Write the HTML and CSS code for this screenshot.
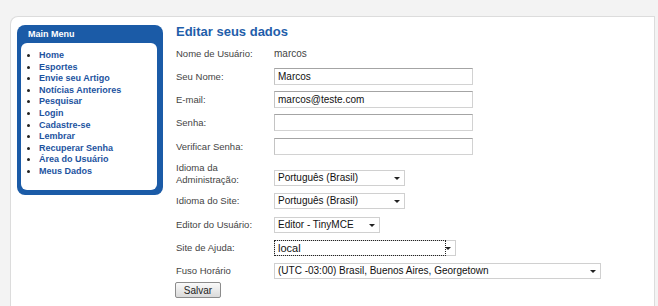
FILE: index.html
```html
<!DOCTYPE html>
<html>
<head>
	<title>Editar seus dados</title>
	<link rel="stylesheet" href="styles.css">
</head>
<body>
	<div class="page">
		<div class="sidebar">
			<div class="menu">
				<h3>Main Menu</h3>
				<div class="menu-body">
					<ul>
						<li><a href="#">Home</a></li>
						<li><a href="#">Esportes</a></li>
						<li><a href="#">Envie seu Artigo</a></li>
						<li><a href="#">Notícias Anteriores</a></li>
						<li><a href="#">Pesquisar</a></li>
						<li><a href="#">Login</a></li>
						<li><a href="#">Cadastre-se</a></li>
						<li><a href="#">Lembrar</a></li>
						<li><a href="#">Recuperar Senha</a></li>
						<li><a href="#">Área do Usuário</a></li>
						<li><a href="#">Meus Dados</a></li>
					</ul>
				</div>
			</div>
		</div>
		<div class="content">
			<h2>Editar seus dados</h2>
			<form>
				<table class="form">
					<tr>
						<td class="label">Nome de Usuário:</td>
						<td class="value">marcos</td>
					</tr>
					<tr>
						<td class="label">Seu Nome:</td>
						<td><input type="text" value="Marcos"></td>
					</tr>
					<tr>
						<td class="label">E-mail:</td>
						<td><input type="text" value="marcos@teste.com"></td>
					</tr>
					<tr>
						<td class="label">Senha:</td>
						<td><input type="password"></td>
					</tr>
					<tr class="wide">
						<td class="label">Verificar Senha:</td>
						<td><input type="password"></td>
					</tr>
					<tr class="tall">
						<td class="label">Idioma da<br>Administração:</td>
						<td class="bottom">
							<span class="select lang"><select><option>Português (Brasil)</option></select></span>
						</td>
					</tr>
					<tr class="wide">
						<td class="label">Idioma do Site:</td>
						<td>
							<span class="select lang"><select><option>Português (Brasil)</option></select></span>
						</td>
					</tr>
					<tr>
						<td class="label">Editor do Usuário:</td>
						<td>
							<span class="select editor"><select><option>Editor - TinyMCE</option></select></span>
						</td>
					</tr>
					<tr>
						<td class="label">Site de Ajuda:</td>
						<td>
							<span class="select help focused"><select><option>local</option></select></span>
						</td>
					</tr>
					<tr>
						<td class="label">Fuso Horário</td>
						<td>
							<span class="select zone"><select><option>(UTC -03:00) Brasil, Buenos Aires, Georgetown</option></select></span>
						</td>
					</tr>
				</table>
				<button type="submit" class="save">Salvar</button>
			</form>
		</div>
	</div>
</body>
</html>
```

FILE: styles.css
```css
body {
  margin: 0;
  background-color: #f3f3f3;
  font-family: "Liberation Sans", Arial, sans-serif;
  color: #333;
}

.page {
  display: flex;
  gap: 13px;
  margin: 16px 3px 0 10px;
  padding: 8px 0 0 6px;
  min-height: 290px;
  box-sizing: border-box;
  background-color: #fff;
  border: 1px solid #dcdcdc;
  border-bottom: none;
  border-top-left-radius: 8px;
}

/* main menu */
.sidebar {
  width: 146px;
  flex-shrink: 0;
}

.menu {
  background-color: #1b5ba7;
  border-radius: 8px;
  padding: 0 6px 5px 4px;
}

.menu h3 {
  margin: 0;
  height: 18px;
  line-height: 19px;
  padding-left: 7px;
  font-size: 9px;
  font-weight: bold;
  color: #fff;
}

.menu-body {
  background-color: #fff;
  border-radius: 6px;
  padding: 7px 0 12px 0;
}

.menu-body ul {
  margin: 0;
  padding-left: 18px;
  color: #222;
}

.menu-body li {
  font-size: 9px;
  line-height: 11.6px;
  font-weight: bold;
}

.menu-body a {
  color: #1d539f;
  text-decoration: none;
}

/* content */
.content {
  flex: 1;
}

.content h2 {
  margin: 0 0 3px;
  font-size: 13px;
  line-height: 14px;
  color: #1f5eaa;
}

.form {
  border-collapse: collapse;
}

.form td {
  height: 23px;
  padding: 0;
  vertical-align: middle;
}

.form tr.wide td {
  height: 25px;
}

.form tr.tall td {
  height: 27px;
}

.form td.bottom {
  vertical-align: bottom;
  padding-bottom: 2px;
}

.form td.label {
  width: 98px;
  font-size: 9.5px;
  line-height: 12px;
  color: #444;
}

.form td.value {
  font-size: 10px;
  color: #444;
}

.form input {
  display: block;
  width: 199px;
  height: 17px;
  box-sizing: border-box;
  margin: 0;
  padding: 0 3px;
  font-family: "Liberation Sans", Arial, sans-serif;
  font-size: 10px;
  color: #111;
  border: 1px solid #d2d2d2;
  border-top-color: #a4a4a4;
  border-left-color: #c4c4c4;
}

/* selects with a drawn arrow */
.select {
  position: relative;
  display: block;
  height: 16px;
  box-sizing: border-box;
  border: 1px solid #d0d0d0;
  background-color: #fff;
}

.select::after {
  content: "";
  position: absolute;
  right: 4px;
  top: 6px;
  border-left: 3px solid transparent;
  border-right: 3px solid transparent;
  border-top: 3px solid #222;
}

.select select {
  appearance: none;
  display: block;
  width: 100%;
  height: 14px;
  margin: 0;
  padding: 0 14px 0 3px;
  border: none;
  background: transparent;
  font-family: "Liberation Sans", Arial, sans-serif;
  font-size: 10px;
  line-height: 14px;
  color: #111;
}

.select.lang {
  width: 131px;
}

.select.editor {
  width: 106px;
}

.select.help {
  width: 182px;
}

.select.zone {
  width: 327px;
}

.select.focused select {
  width: 170px;
  padding-right: 0;
  outline: 1px dotted #222;
  outline-offset: 0;
  font-size: 11px;
}

.save {
  display: block;
  width: 46px;
  height: 16px;
  margin: 0 0 0 -1px;
  padding: 0;
  font-family: "Liberation Sans", Arial, sans-serif;
  font-size: 10px;
  color: #222;
  background: linear-gradient(#fafafa, #dadada);
  border: 1px solid #8c8c8c;
  border-radius: 2px;
  cursor: pointer;
}
```
